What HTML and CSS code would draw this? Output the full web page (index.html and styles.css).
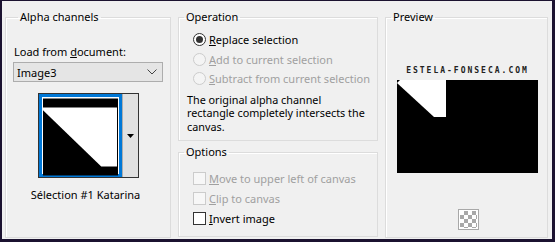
FILE: index.html
```html
<!DOCTYPE html>
<html>
<head>
	<title>Load Selection From Alpha Channel</title>
	<meta charset=utf-8>
	<link rel="stylesheet" href="styles.css">
</head>
<body>
	<div class="panel">
		<fieldset class="group alpha">
			<legend>Alpha channels</legend>
			<div class="label">Load from <u>d</u>ocument:</div>
			<div class="select">
				<span>Image3</span>
				<svg class="chev" width="10" height="6" viewBox="0 0 10 6"><path d="M0.5 0.5 L5 5 L9.5 0.5" fill="none" stroke="#444" stroke-width="1"/></svg>
			</div>
			<div class="thumb">
				<div class="thumb-pic">
					<svg width="76" height="78" viewBox="0 0 76 78">
						<rect width="76" height="78" fill="#000"/>
						<polygon points="0,9 75,9 75,69 59,69 0,12" fill="#fff"/>
					</svg>
				</div>
				<div class="thumb-btn">
					<svg width="7" height="4" viewBox="0 0 7 4"><polygon points="0,0 7,0 3.5,4" fill="#000"/></svg>
				</div>
			</div>
			<div class="caption">Sélection #1 Katarina</div>
		</fieldset>

		<div class="middle">
			<fieldset class="group operation">
				<legend>Operation</legend>
				<div class="row">
					<span class="radio on"></span><span><u>R</u>eplace selection</span>
				</div>
				<div class="row off">
					<span class="radio"></span><span><u>A</u>dd to current selection</span>
				</div>
				<div class="row off">
					<span class="radio"></span><span><u>S</u>ubtract from current selection</span>
				</div>
				<p class="note">The original alpha channel<br>rectangle completely intersects the<br>canvas.</p>
			</fieldset>
			<fieldset class="group options">
				<legend>Options</legend>
				<div class="row off">
					<span class="check"></span><span><u>M</u>ove to upper left of canvas</span>
				</div>
				<div class="row off">
					<span class="check"></span><span><u>C</u>lip to canvas</span>
				</div>
				<div class="row">
					<span class="check"></span><span><u>I</u>nvert image</span>
				</div>
			</fieldset>
		</div>

		<fieldset class="group preview">
			<legend>Preview</legend>
			<div class="mark">ESTELA-FONSECA.COM</div>
			<svg class="shot" width="141" height="93" viewBox="0 0 141 93">
				<rect width="141" height="93" fill="#000"/>
				<polygon points="3,0 49,0 49,37 37,37 0,3" fill="#fff"/>
			</svg>
			<div class="checker"><div></div></div>
		</fieldset>
	</div>
</body>
</html>
```

FILE: styles.css
```css
body{
	margin: 0;
	background: #1b1230;
	font-family: "Noto Sans", "Open Sans", sans-serif;
	font-size: 11px;
	color: #000;
	white-space: nowrap;
}
.panel{
	margin: 1px 3px 3px 2px;
	height: 238px;
	background: #f0f0f0;
	box-sizing: border-box;
	padding: 8px 0 0 3px;
	display: flex;
	gap: 7px;
}
.group{
	margin: 0;
	padding: 0;
	border: 1px solid #dcdcdc;
	box-shadow: inset 1px 1px 0 #fff;
	box-sizing: border-box;
	min-width: 0;
}
.group legend{
	margin-left: 5px;
	padding: 0 2px;
	line-height: 16px;
}
.alpha{
	width: 166px;
	height: 229px;
	padding: 0 7px;
	display: flex;
	flex-direction: column;
}
.label{
	margin-top: 19px;
	padding-left: 1px;
	line-height: 16px;
}
.select{
	margin-top: 2px;
	height: 20px;
	box-sizing: border-box;
	border: 1px solid #adadad;
	background: #e5e5e5;
	display: flex;
	align-items: center;
	justify-content: space-between;
	padding: 0 5px 0 3px;
}
.thumb{
	margin-top: 11px;
	align-self: center;
	display: flex;
	border: 1px solid #333;
	width: 101px;
	height: 85px;
	box-sizing: border-box;
}
.thumb-pic{
	border: 3px solid #0078d7;
	padding: 1px;
	background: #fff;
	width: 83px;
	height: 83px;
	box-sizing: border-box;
	display: flex;
}
.thumb-btn{
	flex: 1;
	background: #e1e1e1;
	border-left: 1px solid #adadad;
	display: flex;
	align-items: center;
	justify-content: center;
}
.caption{
	margin-top: 9px;
	text-align: center;
	line-height: 16px;
	padding-right: 5px;
}
.middle{
	width: 200px;
	display: flex;
	flex-direction: column;
	gap: 3px;
}
.operation{
	height: 132px;
	padding-top: 5px;
}
.row{
	height: 19.5px;
	margin-left: 14px;
	display: flex;
	align-items: center;
	gap: 3px;
}
.row.off{
	color: #a0a0a0;
}
.radio{
	width: 13px;
	height: 13px;
	border-radius: 50%;
	box-sizing: border-box;
	border: 1px solid #ccc;
	background: #f4f4f4;
	display: flex;
	align-items: center;
	justify-content: center;
}
.radio.on{
	border-color: #333;
	background: #fff;
}
.radio.on::after{
	content: "";
	width: 7px;
	height: 7px;
	border-radius: 50%;
	background: #333;
}
.note{
	margin: 4px 0 0 8px;
	line-height: 13.5px;
	font-size: 10.8px;
}
.options{
	height: 93px;
	padding-top: 8px;
}
.options .row{
	height: 20px;
}
.check{
	width: 13px;
	height: 13px;
	box-sizing: border-box;
	border: 1px solid #ccc;
	background: #f7f7f7;
}
.row:not(.off) .check{
	border-color: #333;
	background: #fff;
}
.preview{
	width: 163px;
	height: 229px;
	display: flex;
	flex-direction: column;
	align-items: center;
}
.mark{
	margin-top: 41px;
	font-family: "DejaVu Sans Mono", monospace;
	font-size: 8px;
	font-weight: bold;
	letter-spacing: 2px;
	line-height: 10px;
	color: #222;
	padding-left: 2px;
}
.shot{
	margin-top: 4px;
	margin-left: 2px;
	display: block;
}
.checker{
	margin: 36px 0 0 4px;
	width: 21px;
	height: 21px;
	box-sizing: border-box;
	border: 1px solid #a8a8a8;
	padding: 1px;
	background: #fff;
}
.checker div{
	width: 100%;
	height: 100%;
	background: repeating-conic-gradient(#a8a8a8 0 25%, #fff 0 50%) 0 0/8px 8px;
}
```
